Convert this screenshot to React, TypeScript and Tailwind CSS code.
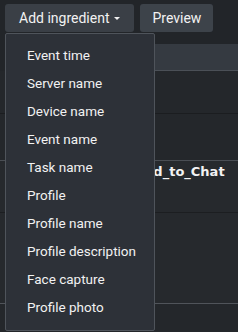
import { useState } from 'react'

const items = [
  'Event time',
  'Server name',
  'Device name',
  'Event name',
  'Task name',
  'Profile',
  'Profile name',
  'Profile description',
  'Face capture',
  'Profile photo',
]

export default function App() {
  const [open] = useState(true)

  return (
    <div className="relative h-[332px] w-[238px] overflow-hidden bg-[#222529] font-['Roboto',sans-serif] text-[#f2f2f2]">
      <div className="flex gap-[6px] pl-[5px] pt-[4px]">
        <button className="flex h-[28px] items-center gap-[5px] rounded-[3px] bg-[#3a3f46] px-[14px] text-[14px]">
          Add ingredient
          <span className="mt-[1px] h-0 w-0 border-x-[3px] border-t-[3px] border-x-transparent border-t-[#f2f2f2]" />
        </button>
        <button className="h-[28px] rounded-[3px] bg-[#3d434a] px-[12px] text-[14px]">Preview</button>
      </div>

      <div className="mt-[12px]">
        <div className="ml-[5px] h-[27px] border-b border-[#4b5057] bg-[#353a41]" />
        <div className="h-[43px] border-b border-[#1b1d20] bg-[#24272b]" />
        <div className="h-[47px] border-b border-[#4a4e54] bg-[#24272b]" />
        <div className="h-[52px] border-b border-[#1c1e21] bg-[#26292d] pl-[134px] pt-[1px] font-['DejaVu_Sans',sans-serif] text-[13px] font-bold">
          Add_to_Chat
        </div>
        <div className="h-[91px] border-b border-[#50545a] bg-[#26292d]" />
        <div className="h-[40px] bg-[#24272b]" />
      </div>

      {open && (
        <div className="absolute left-[5px] top-[33px] h-[298px] w-[150px] rounded-[2px] border border-[#4f545b] bg-[#2d3138] pt-[7px]">
          {items.map((it) => (
            <div key={it} className="h-[28px] pl-[21px] text-[13.5px] leading-[28px]">
              {it}
            </div>
          ))}
        </div>
      )}
    </div>
  )
}
